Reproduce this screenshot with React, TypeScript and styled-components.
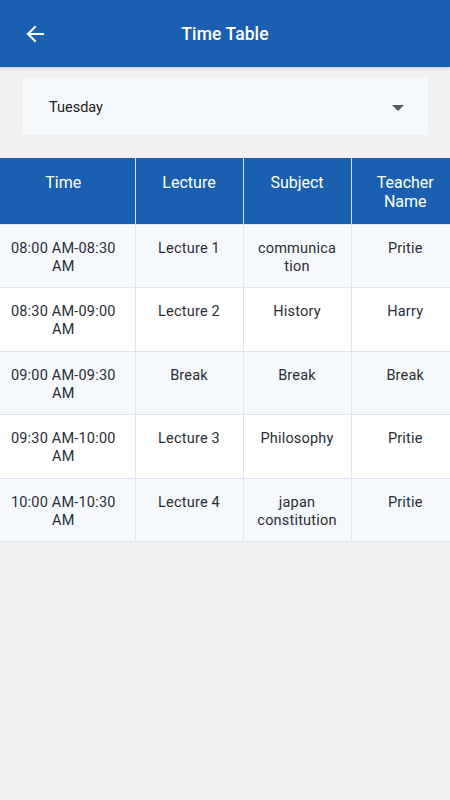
import React from 'react';
import styled, { createGlobalStyle } from 'styled-components';

const GlobalStyle = createGlobalStyle`
  html, body {
    margin: 0;
    padding: 0;
    background: #f0f0f0;
    font-family: Roboto, "Liberation Sans", sans-serif;
  }
`;

const rows = [
  { time: '08:00 AM-08:30 AM', lecture: 'Lecture 1', subject: 'communica tion', teacher: 'Pritie' },
  { time: '08:30 AM-09:00 AM', lecture: 'Lecture 2', subject: 'History', teacher: 'Harry' },
  { time: '09:00 AM-09:30 AM', lecture: 'Break', subject: 'Break', teacher: 'Break' },
  { time: '09:30 AM-10:00 AM', lecture: 'Lecture 3', subject: 'Philosophy', teacher: 'Pritie' },
  { time: '10:00 AM-10:30 AM', lecture: 'Lecture 4', subject: 'japan constitution', teacher: 'Pritie' },
];

const App = () => {
  return (
    <Page>
      <GlobalStyle />
      <AppBar>
        <BackButton aria-label="Back">
          <svg width="24" height="24" viewBox="0 0 24 24" fill="none">
            <path d="M20 12H5M12 5l-7 7 7 7" stroke="#fff" strokeWidth="2.2" strokeLinecap="square" />
          </svg>
        </BackButton>
        <Title>Time Table</Title>
      </AppBar>

      <DayPicker>
        <span>Tuesday</span>
        <Caret />
      </DayPicker>

      <TableScroll>
        <Table>
          <colgroup>
            <col style={{ width: 135 }} />
            <col style={{ width: 108 }} />
            <col style={{ width: 108 }} />
            <col />
          </colgroup>
          <thead>
            <tr>
              <Head>Time</Head>
              <Head>Lecture</Head>
              <Head>Subject</Head>
              <Head>Teacher Name</Head>
            </tr>
          </thead>
          <tbody>
            {rows.map((r, i) => (
              <Row key={i} $shaded={i % 2 === 0}>
                <Cell>{r.time}</Cell>
                <Cell>{r.lecture}</Cell>
                <Cell>{r.subject}</Cell>
                <Cell>{r.teacher}</Cell>
              </Row>
            ))}
          </tbody>
        </Table>
      </TableScroll>
    </Page>
  );
};

export default App;

const Page = styled.div`
  width: 450px;
  min-height: 800px;
  background: #f0f0f0;
`;

const AppBar = styled.header`
  height: 67px;
  background: #1b5fb1;
  display: flex;
  align-items: center;
  box-shadow: 0 1px 3px rgba(0, 0, 0, 0.18);
`;

const BackButton = styled.button`
  border: none;
  background: transparent;
  padding: 0;
  margin-left: 23px;
  width: 24px;
  height: 24px;
  display: flex;
  align-items: center;
  justify-content: center;
`;

const Title = styled.h1`
  flex: 1;
  margin: 0 0 0 -47px;
  text-align: center;
  color: #fff;
  font-size: 17.5px;
  font-weight: 500;
  letter-spacing: 0.1px;
`;

const DayPicker = styled.div`
  margin: 11px 22px 23px 23px;
  height: 57px;
  background: #f6f9fc;
  display: flex;
  align-items: center;
  justify-content: space-between;
  padding: 2px 24px 0 26px;
  box-sizing: border-box;
  font-size: 14.5px;
  color: #222;
`;

const Caret = styled.span`
  width: 0;
  height: 0;
  border-left: 6px solid transparent;
  border-right: 6px solid transparent;
  border-top: 6px solid #5a5a5a;
`;

const TableScroll = styled.div`
  width: 450px;
  overflow: hidden;
`;

const Table = styled.table`
  width: 460px;
  table-layout: fixed;
  border-collapse: collapse;
`;

const Head = styled.th`
  background: #1b5fb1;
  color: #fff;
  font-size: 16px;
  font-weight: 400;
  line-height: 19px;
  height: 66px;
  box-sizing: border-box;
  padding: 15px 6px 12px;
  vertical-align: top;
  text-align: center;
  border: 1px solid #dbe5ef;
  border-top: none;
  &:first-child { border-left: none; padding: 15px 12px 12px 4px; }
`;

const Row = styled.tr<{ $shaded: boolean }>`
  background: ${({ $shaded }) => ($shaded ? '#f5f9fd' : '#ffffff')};
`;

const Cell = styled.td`
  font-size: 14.5px;
  line-height: 18px;
  color: #2a2e36;
  height: 63.6px;
  box-sizing: border-box;
  padding: 15px 6px 11px;
  vertical-align: top;
  text-align: center;
  border: 1px solid #dde6ef;
  letter-spacing: 0.2px;
  &:first-child { border-left: none; padding: 15px 12px 11px 4px; }
`;
